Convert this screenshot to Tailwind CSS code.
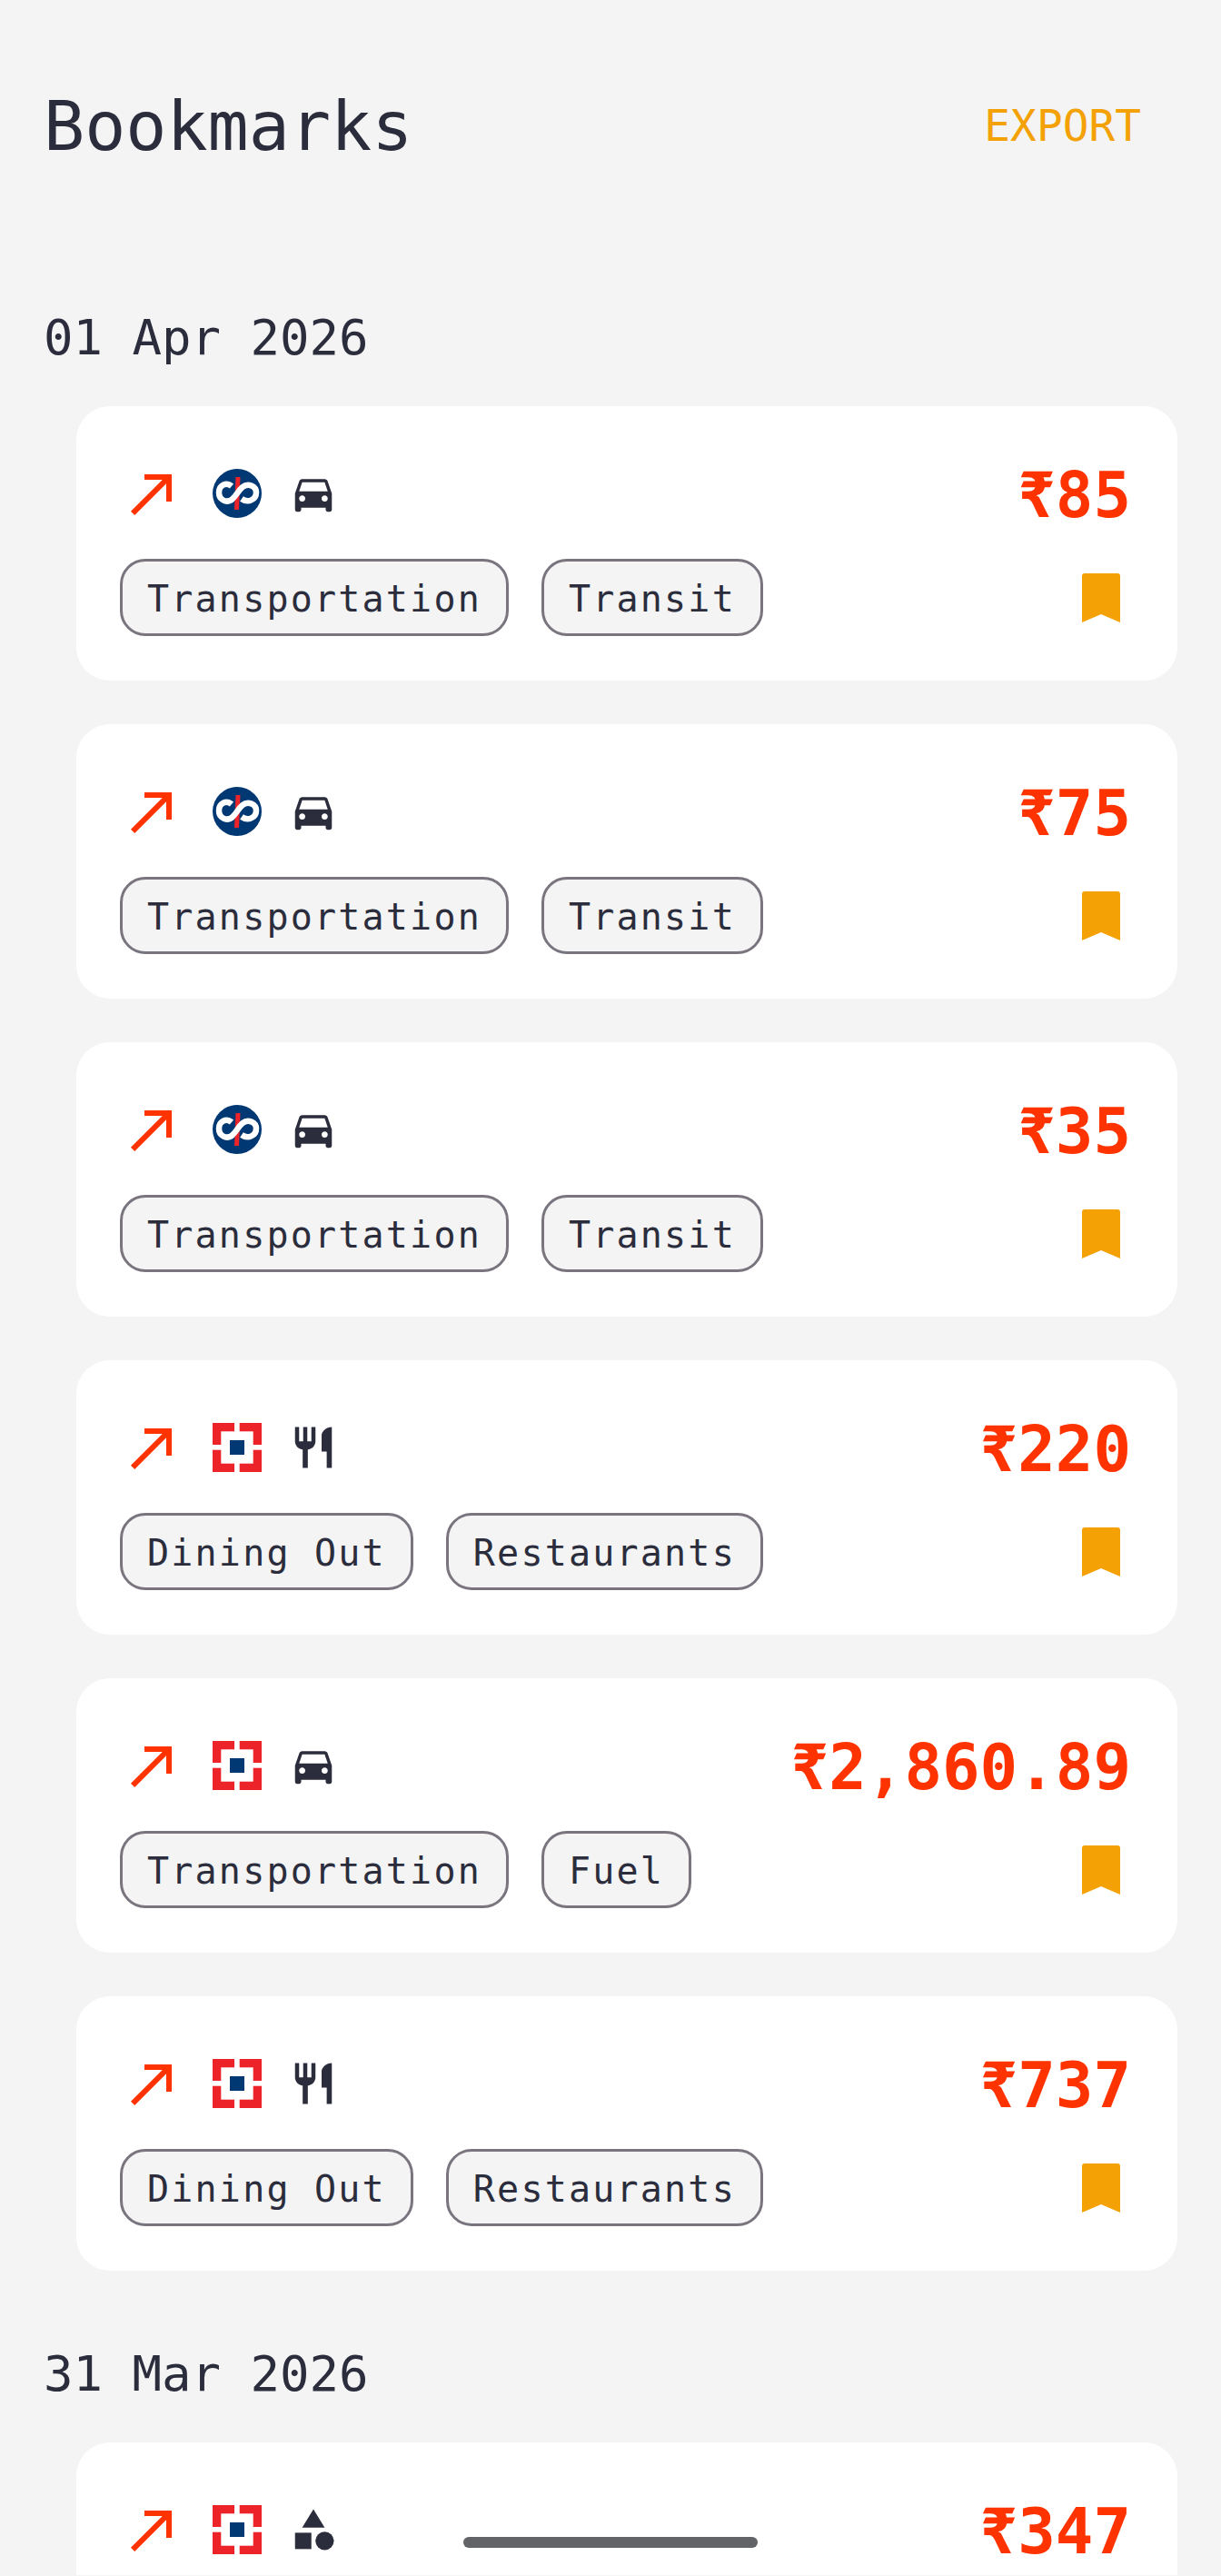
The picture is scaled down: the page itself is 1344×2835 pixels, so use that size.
<!DOCTYPE html>
<html lang="en">
<head>
  <meta charset="UTF-8" />
  <meta name="viewport" content="width=device-width, initial-scale=1.0"/>
  <title>Bookmarks</title>
  <script src="https://cdn.jsdelivr.net/npm/@tailwindcss/browser@4"></script>
</head>
<body class="bg-[#f4f4f4] font-['DejaVu_Sans_Mono',monospace] text-[#2b2d3d]">
  <svg class="hidden">
    <defs>
      <pattern id="checker" width="4" height="4" patternUnits="userSpaceOnUse">
        <rect width="4" height="4" fill="#ffffff"/>
        <rect width="2" height="2" fill="#f3f3f3"/>
        <rect x="2" y="2" width="2" height="2" fill="#f3f3f3"/>
      </pattern>
    </defs>
  </svg>

  <div class="relative h-[2834px] w-[1344px] overflow-hidden">
    <header class="flex items-center justify-between pt-[99px] pl-[48px] pr-[88px]">
      <h1 class="text-[75px] leading-[80px] font-normal">Bookmarks</h1>
      <button class="text-[47.8px] leading-[80px] text-[#f3a104]">EXPORT</button>
    </header>
    <main id="list" class="pt-[161px]"></main>

    <!-- gesture bar -->
    <div class="absolute left-[510px] top-[2792px] h-[12px] w-[324px] rounded-full bg-[#636467]"></div>
  </div>

  <script>
    const arrowIcon = `<svg class="h-[72px] w-[72px] shrink-0" viewBox="0 0 24 24" fill="#ff3300"><path d="M9 5v2h6.59L4 18.59 5.41 20 17 8.41V15h2V5z"/></svg>`;

    const kotakLogo = `<svg class="h-[54px] w-[54px] shrink-0" viewBox="0 0 54 54">
      <rect width="54" height="54" fill="url(#checker)"/>
      <circle cx="27" cy="27" r="27" fill="#003874"/>
      <path d="M25.5 9H30.5L29 45H24z" fill="#ed232a"/>
      <path d="M21 19C15 14 7 18 7 26C7 34 15 38 21 34C26 30 28 24 33 20C39 15 48 19 48 26C48 34 39 38 32 33" fill="none" stroke="#ffffff" stroke-width="6.5"/>
    </svg>`;

    const hdfcLogo = `<svg class="h-[54px] w-[54px] shrink-0" viewBox="0 0 54 54">
      <rect width="54" height="54" fill="#ed232a"/>
      <rect x="9.3" y="9.3" width="35.4" height="35.4" fill="#ffffff"/>
      <rect x="24" width="5.7" height="54" fill="#ffffff"/>
      <rect y="24" width="54" height="5.7" fill="#ffffff"/>
      <rect x="19" y="19" width="16" height="16" fill="#003874"/>
    </svg>`;

    const carIcon = `<svg class="h-[54px] w-[54px] shrink-0" viewBox="0 0 24 24" fill="#2b2d3d"><path d="M18.92 6.01C18.72 5.42 18.16 5 17.5 5h-11c-.66 0-1.21.42-1.42 1.01L3 12v8c0 .55.45 1 1 1h1c.55 0 1-.45 1-1v-1h12v1c0 .55.45 1 1 1h1c.55 0 1-.45 1-1v-8l-2.08-5.99zM6.5 16c-.83 0-1.5-.67-1.5-1.5S5.67 13 6.5 13s1.5.67 1.5 1.5S7.33 16 6.5 16zm11 0c-.83 0-1.5-.67-1.5-1.5s.67-1.5 1.5-1.5 1.5.67 1.5 1.5-.67 1.5-1.5 1.5zM5 11l1.5-4.5h11L19 11H5z"/></svg>`;

    const diningIcon = `<svg class="h-[54px] w-[54px] shrink-0" viewBox="0 0 24 24" fill="#2b2d3d"><path d="M11 9H9V2H7v7H5V2H3v7c0 2.12 1.66 3.84 3.75 3.97V22h2.5v-9.03C11.34 12.84 13 11.12 13 9V2h-2v7zm5-3v8h2.5v8H21V2c-2.76 0-5 2.24-5 4z"/></svg>`;

    const otherIcon = `<svg class="h-[54px] w-[54px] shrink-0" viewBox="0 0 24 24" fill="#2b2d3d"><path d="M12 2l-5.5 9h11z"/><circle cx="17.5" cy="17.5" r="4.5"/><path d="M3 13.5h8v8H3z"/></svg>`;

    const bookmarkIcon = `<svg class="mr-[15px] h-[54px] w-[42px] shrink-0" viewBox="0 0 42 54" fill="#f3a104"><path d="M3 0h36a3 3 0 0 1 3 3v51l-21-9-21 9V3a3 3 0 0 1 3-3z"/></svg>`;

    const sections = [
      { date: '01 Apr 2026', items: [
        { logo: kotakLogo, icon: carIcon, amount: '₹85', tags: ['Transportation', 'Transit'] },
        { logo: kotakLogo, icon: carIcon, amount: '₹75', tags: ['Transportation', 'Transit'] },
        { logo: kotakLogo, icon: carIcon, amount: '₹35', tags: ['Transportation', 'Transit'] },
        { logo: hdfcLogo, icon: diningIcon, amount: '₹220', tags: ['Dining Out', 'Restaurants'] },
        { logo: hdfcLogo, icon: carIcon, amount: '₹2,860.89', tags: ['Transportation', 'Fuel'] },
        { logo: hdfcLogo, icon: diningIcon, amount: '₹737', tags: ['Dining Out', 'Restaurants'] }
      ]},
      { date: '31 Mar 2026', items: [
        { logo: hdfcLogo, icon: otherIcon, amount: '₹347', tags: [] }
      ]}
    ];

    function renderTag(tag) {
      return `<span class="flex h-[85px] items-center rounded-[28px] border-[3px] border-[#79747e] bg-[#f4f4f4] px-[27px] pt-[2px] text-[40px] tracking-[2.2px] whitespace-nowrap">${tag}</span>`;
    }

    function renderCard(item) {
      return `<article class="min-h-[302px] rounded-[37px] bg-white px-[48px] pt-[60px]">
        <div class="flex h-[72px] items-center">
          ${arrowIcon}
          <div class="ml-[30px] flex items-center gap-[30px]">${item.logo}${item.icon}</div>
          <span class="ml-auto mr-[3px] pt-[4px] text-[69.1px] leading-[72px] font-bold text-[#ff3300]">${item.amount}</span>
        </div>
        <div class="mt-[36px] flex items-center justify-between">
          <div class="flex gap-[36px]">${item.tags.map(renderTag).join('')}</div>
          ${item.tags.length ? bookmarkIcon : ''}
        </div>
      </article>`;
    }

    document.getElementById('list').innerHTML = sections.map(section => `
      <section class="mb-[82px]">
        <h2 class="pl-[48px] text-[54px] leading-[64px] font-normal">${section.date}</h2>
        <div class="mt-[43px] ml-[84px] mr-[48px] flex flex-col gap-[48px]">
          ${section.items.map(renderCard).join('')}
        </div>
      </section>`).join('');
  </script>
</body>
</html>
